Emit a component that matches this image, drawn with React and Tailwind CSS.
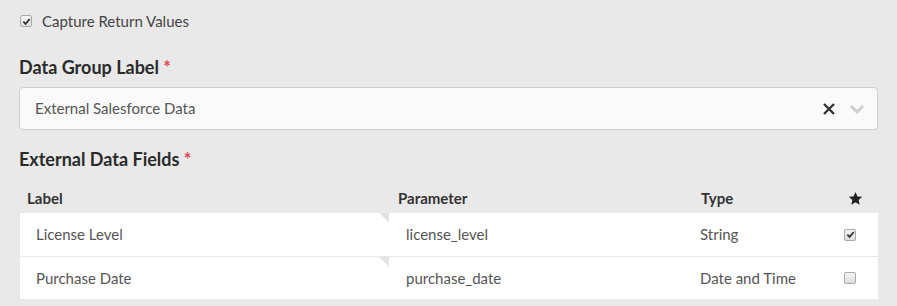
import React from "react";

const Check = ({ checked }) => (
  <span className="inline-flex h-[12px] w-[12px] items-center justify-center rounded-[2px] border border-[#a9a9a9] bg-gradient-to-b from-[#f4f4f4] to-[#dedede]">
    {checked && (
      <svg width="9" height="9" viewBox="0 0 10 10">
        <path d="M1.5 5.2 L4 7.6 L8.6 2.2" fill="none" stroke="#333" strokeWidth="2" />
      </svg>
    )}
  </span>
);

const Fold = () => (
  <span className="absolute right-0 top-0 h-0 w-0 border-l-[10px] border-t-[10px] border-l-transparent border-t-[#e3e3e3]" />
);

const rows = [
  { label: "License Level", param: "license_level", type: "String", key: true },
  { label: "Purchase Date", param: "purchase_date", type: "Date and Time", key: false },
];

export default function App() {
  return (
    <div
      className="h-[306px] w-[897px] overflow-hidden bg-[#e9e9e9] pl-[19px] pr-[19px] text-[#555]"
      style={{ fontFamily: "Lato, 'Noto Sans', sans-serif" }}
    >
      <div className="flex items-center gap-[10px] pl-[1px] pt-[11px] text-[15px] leading-[20px] text-[#444]">
        <Check checked />
        <span>Capture Return Values</span>
      </div>

      <h2 className="mt-[24px] text-[18px] font-bold leading-[24px] text-[#2b2b2b]">
        Data Group Label <span className="text-[#e0474c]">*</span>
      </h2>

      <div className="mt-[8px] flex h-[43px] items-center rounded-[4px] border border-[#cfcfcf] bg-[#fafafa] pl-[15px] pr-[12px] text-[15px]">
        <span className="flex-1">External Salesforce Data</span>
        <svg width="14" height="14" viewBox="0 0 14 14" className="mr-[13px]">
          <path d="M2 2 L12 12 M12 2 L2 12" stroke="#333" strokeWidth="2.4" />
        </svg>
        <svg width="16" height="12" viewBox="0 0 16 12">
          <path d="M2 3 L8 9 L14 3" fill="none" stroke="#cdcdcd" strokeWidth="3" />
        </svg>
      </div>

      <h2 className="mt-[17px] text-[18px] font-bold leading-[24px] text-[#2b2b2b]">
        External Data Fields <span className="text-[#e0474c]">*</span>
      </h2>

      <div className="ml-[1px] mt-[13px] w-[858px]">
        <div className="grid h-[29px] grid-cols-[369px_303px_138px_1fr] items-center text-[15px] font-bold text-[#333]">
          <div className="pl-[7px]">Label</div>
          <div className="pl-[9px]">Parameter</div>
          <div className="pl-[9px]">Type</div>
          <div className="flex justify-center pl-[2px]">
            <svg width="15" height="15" viewBox="0 0 24 24">
              <path d="M12 1.5l3.1 7.1 7.7.7-5.8 5.1 1.7 7.6L12 18l-6.7 4 1.7-7.6-5.8-5.1 7.7-.7z" fill="#222" />
            </svg>
          </div>
        </div>
        {rows.map((r, i) => (
          <div
            key={r.param}
            className={`grid grid-cols-[369px_303px_138px_1fr] items-center bg-white text-[15px] text-[#555] ${
              i === 0 ? "h-[44px] border-b border-[#e8e8e8]" : "h-[42px]"
            }`}
          >
            <div className="relative flex h-full items-center pl-[16px]">
              {r.label}
              <Fold />
            </div>
            <div className="pl-[17px]">{r.param}</div>
            <div className="pl-[8px]">{r.type}</div>
            <div className="flex justify-center pr-[8px]">
              <Check checked={r.key} />
            </div>
          </div>
        ))}
      </div>
    </div>
  );
}
